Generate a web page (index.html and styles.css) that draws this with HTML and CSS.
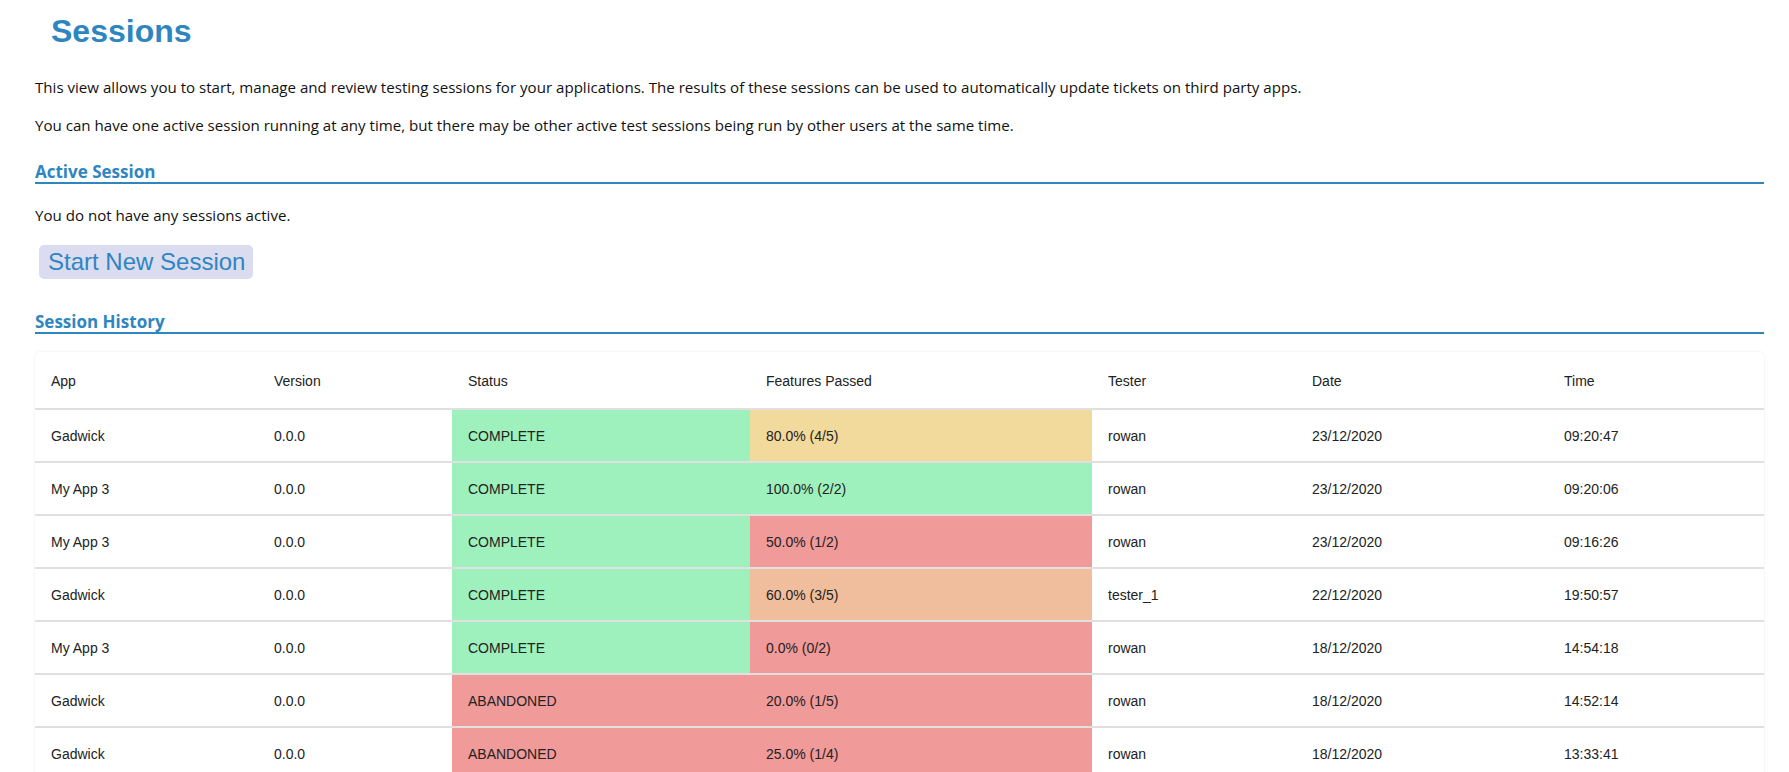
FILE: index.html
```html
<!DOCTYPE html>
<html lang="en">
<head>
<meta charset="utf-8">
<title>Sessions</title>
<link rel="stylesheet" href="styles.css">
</head>
<body>
<main class="page">
  <h1 class="title">Sessions</h1>
  <p class="intro">This view allows you to start, manage and review testing sessions for your applications. The results of these sessions can be used to automatically update tickets on third party apps.</p>
  <p class="intro">You can have one active session running at any time, but there may be other active test sessions being run by other users at the same time.</p>

  <h2 class="section-head">Active Session</h2>
  <p class="note">You do not have any sessions active.</p>
  <button class="btn-start" type="button">Start New Session</button>

  <h2 class="section-head section-head--history">Session History</h2>
  <div class="card">
    <table class="sessions">
      <colgroup>
        <col class="c-app"><col class="c-version"><col class="c-status"><col class="c-features"><col class="c-tester"><col class="c-date"><col class="c-time">
      </colgroup>
      <thead>
        <tr><th>App</th><th>Version</th><th>Status</th><th>Features Passed</th><th>Tester</th><th>Date</th><th>Time</th></tr>
      </thead>
      <tbody>
        <tr><td>Gadwick</td><td>0.0.0</td><td class="ok">COMPLETE</td><td class="warn">80.0% (4/5)</td><td>rowan</td><td>23/12/2020</td><td>09:20:47</td></tr>
        <tr><td>My App 3</td><td>0.0.0</td><td class="ok">COMPLETE</td><td class="ok">100.0% (2/2)</td><td>rowan</td><td>23/12/2020</td><td>09:20:06</td></tr>
        <tr><td>My App 3</td><td>0.0.0</td><td class="ok">COMPLETE</td><td class="bad">50.0% (1/2)</td><td>rowan</td><td>23/12/2020</td><td>09:16:26</td></tr>
        <tr><td>Gadwick</td><td>0.0.0</td><td class="ok">COMPLETE</td><td class="mid">60.0% (3/5)</td><td>tester_1</td><td>22/12/2020</td><td>19:50:57</td></tr>
        <tr><td>My App 3</td><td>0.0.0</td><td class="ok">COMPLETE</td><td class="bad">0.0% (0/2)</td><td>rowan</td><td>18/12/2020</td><td>14:54:18</td></tr>
        <tr><td>Gadwick</td><td>0.0.0</td><td class="bad">ABANDONED</td><td class="bad">20.0% (1/5)</td><td>rowan</td><td>18/12/2020</td><td>14:52:14</td></tr>
        <tr><td>Gadwick</td><td>0.0.0</td><td class="bad">ABANDONED</td><td class="bad">25.0% (1/4)</td><td>rowan</td><td>18/12/2020</td><td>13:33:41</td></tr>
      </tbody>
    </table>
  </div>
</main>
</body>
</html>
```

FILE: styles.css
```css
html, body {
  margin: 0;
  padding: 0;
  background: #ffffff;
}

body {
  font-family: "Open Sans", "Noto Sans", sans-serif;
  font-size: 15.1px;
  color: #111;
}

.page {
  padding: 0 25px 0 35px;
}

.title {
  margin: 13px 0 0 16px;
  font-family: "Liberation Sans", Arial, sans-serif;
  font-size: 32px;
  font-weight: 700;
  line-height: 37px;
  color: #2e86c1;
}

.intro {
  margin: 27px 0 0;
  line-height: 21px;
}

.intro + .intro {
  margin-top: 17px;
}

.section-head {
  margin: 25px 0 0;
  padding-bottom: 0;
  font-size: 17px;
  font-weight: 700;
  line-height: 21px;
  color: #2e86c1;
  border-bottom: 2px solid #2e86c1;
}

.note {
  margin: 21px 0 0;
  line-height: 21px;
}

.btn-start {
  display: block;
  margin: 19px 0 0 4px;
  padding: 0 8px 0 9px;
  height: 34px;
  border: none;
  border-radius: 5px;
  background: #dcdcf0;
  color: #2e86c1;
  font-family: "Liberation Sans", Arial, sans-serif;
  font-size: 24px;
  line-height: 34px;
}

.section-head--history {
  margin-top: 32px;
}

.card {
  margin-top: 18px;
  background: #fff;
  border-radius: 5px;
  box-shadow: 0 0 3px rgba(0, 0, 0, 0.08);
  overflow: hidden;
}

.sessions {
  width: 100%;
  border-collapse: collapse;
  table-layout: fixed;
  font-family: "Liberation Sans", Arial, sans-serif;
  font-size: 14px;
  color: #222;
}

.c-app { width: 223px; }
.c-version { width: 194px; }
.c-status { width: 298px; }
.c-features { width: 342px; }
.c-tester { width: 204px; }
.c-date { width: 252px; }
.c-time { width: 216px; }

.sessions th {
  height: 55px;
  padding: 1px 16px 0;
  text-align: left;
  font-weight: 400;
  vertical-align: middle;
}

.sessions td {
  height: 51px;
  padding: 0 16px;
  vertical-align: middle;
  border-top: 2px solid #e0e0e0;
}

.ok { background: #9ef1bc; }
.warn { background: #f2d99c; }
.mid { background: #f0be9c; }
.bad { background: #f09a9a; }
```
